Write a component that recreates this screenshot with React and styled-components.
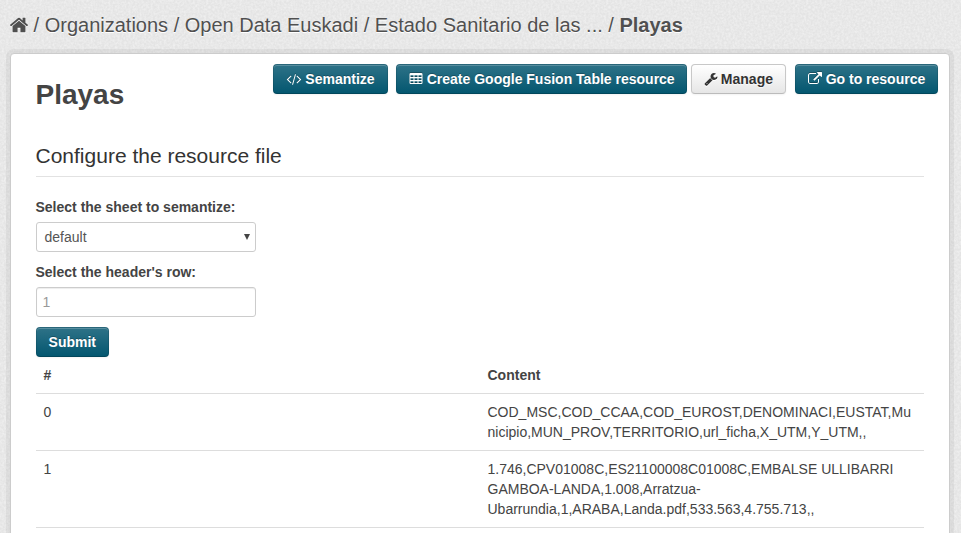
import React from "react";
import styled, { createGlobalStyle, css } from "styled-components";

const noise =
  "<svg xmlns='http://www.w3.org/2000/svg' width='200' height='200'><filter id='n' x='0' y='0' width='100%' height='100%'><feTurbulence type='fractalNoise' baseFrequency='0.45' numOctaves='2' seed='4' stitchTiles='stitch'/><feColorMatrix values='0 0 0 0 1  0 0 0 0 1  0 0 0 0 1  0.8 0 0 0 -0.25'/></filter><rect width='200' height='200' filter='url(#n)'/></svg>";

const GlobalStyle = createGlobalStyle`
  *, *::before, *::after { box-sizing: border-box; }
  body {
    margin: 0;
    height: 533px;
    overflow: hidden;
    color: #444;
    font: 14px/20px "Liberation Sans", Arial, sans-serif;
    background: #e4e4e4 url("data:image/svg+xml,${encodeURIComponent(noise).replace(/'/g, "%27")}");
  }
`;

const Page = styled.div`
  height: 533px;
  overflow: hidden;
  padding: 0 11.5px 0 9.5px;
`;

const Breadcrumb = styled.nav`
  display: flex;
  align-items: center;
  height: 53px;
  padding-bottom: 3px;
  font-size: 20px;
  line-height: 26px;
  white-space: pre;
  color: #505050;
  text-shadow: 0 1px 0 #fff;
`;

const Current = styled.strong`
  font-weight: 700;
`;

const Glyph = styled.svg`
  flex: none;
  display: block;
  width: ${(p) => p.$size}px;
  height: ${(p) => p.$size}px;
  margin: ${(p) => p.$margin || "0"};
  fill: currentColor;
  overflow: visible;
  filter: drop-shadow(${(p) => p.$shadow || "0 -1px 0 rgba(0, 0, 0, 0.25)"});
`;

const Panel = styled.main`
  height: 600px;
  padding: 10px 25px 0;
  background: #fff;
  border: 1px solid #ccc;
  border-radius: 4px 4px 0 0;
  box-shadow: 0 0 0 4px rgba(0, 0, 0, 0.05);
`;

const Header = styled.header`
  display: flex;
  justify-content: space-between;
  height: 70px;
  margin-right: -14px;
`;

const Title = styled.h1`
  margin: 11px 0 0;
  font-size: 28px;
  line-height: 40px;
  font-weight: 700;
`;

const Actions = styled.div`
  display: flex;
  height: 30px;
`;

const Button = styled.button`
  display: inline-flex;
  align-items: center;
  justify-content: center;
  width: ${(p) => p.$width}px;
  height: 30px;
  margin: 0 0 0 ${(p) => p.$gap || 0}px;
  padding: 0;
  font: 700 14px/20px "Liberation Sans", Arial, sans-serif;
  white-space: pre;
  border-radius: 4px;
  ${(p) =>
    p.$plain
      ? css`
          color: #333;
          background: linear-gradient(#fff, #e6e6e6);
          border: 1px solid #c8c8c8;
          border-bottom-color: #bbb;
          text-shadow: 0 1px 1px rgba(255, 255, 255, 0.75);
        `
      : css`
          color: #fff;
          background: linear-gradient(#2f7388, #02566f) border-box;
          border: 1px solid rgba(0, 0, 0, 0.1);
          border-bottom-color: rgba(0, 0, 0, 0.18);
          text-shadow: 0 -1px 0 rgba(0, 0, 0, 0.25);
        `}
  box-shadow: inset 0 1px 0 rgba(255, 255, 255, 0.2), 0 1px 2px rgba(0, 0, 0, 0.05);
`;

const SectionTitle = styled.h2`
  margin: 0 0 20px;
  height: 43px;
  padding-top: 7px;
  border-bottom: 1px solid #e2e2e2;
  font-size: 21px;
  line-height: 30px;
  font-weight: 400;
  color: #333;
`;

const Form = styled.form`
  display: flex;
  flex-direction: column;
  align-items: flex-start;
`;

const Label = styled.label`
  margin-bottom: 5px;
  font-weight: 700;
`;

const Control = styled.div`
  display: flex;
  align-items: center;
  justify-content: space-between;
  width: 220px;
  height: 30px;
  margin-bottom: 10px;
  padding: 0 4.5px 0 8px;
  color: #555;
  background: #fff;
  border: 1px solid #ccc;
  border-radius: 3px;
`;

const Arrow = styled.svg`
  width: 6px;
  height: 6px;
  fill: #444;
`;

const Input = styled.input`
  width: 220px;
  height: 30px;
  margin: 0 0 10px;
  padding: 4px 6px;
  font: 14px/20px "Liberation Sans", Arial, sans-serif;
  color: #555;
  border: 1px solid #ccc;
  border-radius: 3px;
  box-shadow: inset 0 1px 1px rgba(0, 0, 0, 0.075);
  &::placeholder { color: #999; }
`;

const Table = styled.table`
  width: 888px;
  table-layout: fixed;
  border-collapse: collapse;
`;

const Cell = styled.td`
  padding: 8px;
  text-align: left;
  vertical-align: top;
  overflow-wrap: break-word;
  border-bottom: 1px solid #ddd;
`;

const icons = {
  home: "M1472 992v480q0 26-19 45t-45 19h-384v-384h-256v384h-384q-26 0-45-19t-19-45v-480q0-1 .5-3t.5-3l575-474 575 474q1 2 1 6zm223-69l-62 74q-8 9-21 11h-3q-13 0-21-7l-692-577-692 577q-12 8-24 7-13-2-21-11l-62-74q-8-10-7-23.5t11-21.5l719-599q32-26 76-26t76 26l244 204v-195q0-14 9-23t23-9h192q14 0 23 9t9 23v408l219 182q10 8 11 21.5t-7 23.5z",
  code: "M553 1399l-50 50q-10 10-23 10t-23-10l-466-466q-10-10-10-23t10-23l466-466q10-10 23-10t23 10l50 50q10 10 10 23t-10 23l-393 393 393 393q10 10 10 23t-10 23zm591-1067l-373 1291q-4 13-15.5 19.5t-23.5 2.5l-62-17q-13-4-19.5-15.5t-2.5-24.5l373-1291q4-13 15.5-19.5t23.5-2.5l62 17q13 4 19.5 15.5t2.5 24.5zm657 651l-466 466q-10 10-23 10t-23-10l-50-50q-10-10-10-23t10-23l393-393-393-393q-10-10-10-23t10-23l50-50q10-10 23-10t23 10l466 466q10 10 10 23t-10 23z",
  table:
    "M224 128h1344q66 0 113 47t47 113v1088q0 66-47 113t-113 47h-1344q-66 0-113-47t-47-113v-1088q0-66 47-113t113-47z" +
    [192, 704, 1216]
      .map((x) => [416, 800, 1184].map((y) => `M${x} ${y}v224h384v-224z`).join(""))
      .join(""),
  wrench: "M448 1472q0-26-19-45t-45-19-45 19-19 45 19 45 45 19 45-19 19-45zm644-420l-682 682q-37 37-90 37-52 0-91-37l-106-108q-38-36-38-90 0-53 38-91l681-681q39 98 114.5 173.5t173.5 114.5zm634-435q0 39-23 106-47 134-164.5 217.5t-258.5 83.5q-185 0-316.5-131.5t-131.5-316.5 131.5-316.5 316.5-131.5q58 0 121.5 16.5t107.5 46.5q16 11 16 28t-16 28l-293 169v224l193 107q5-3 79-48.5t135.5-81 70.5-35.5q15 0 23.5 10t8.5 25z",
  external: "M1408 928v320q0 119-84.5 203.5t-203.5 84.5h-832q-119 0-203.5-84.5t-84.5-203.5v-832q0-119 84.5-203.5t203.5-84.5h704q14 0 23 9t9 23v64q0 14-9 23t-23 9h-704q-66 0-113 47t-47 113v832q0 66 47 113t113 47h832q66 0 113-47t47-113v-320q0-14 9-23t23-9h64q14 0 23 9t9 23zm384-864v512q0 26-19 45t-45 19-45-19l-176-176-652 652q-10 10-23 10t-23-10l-114-114q-10-10-10-23t10-23l652-652-176-176q-19-19-19-45t19-45 45-19h512q26 0 45 19t19 45z",
};

function Icon({ name, size = 14, margin, shadow }) {
  return (
    <Glyph viewBox="0 0 1792 1792" $size={size} $margin={margin} $shadow={shadow} aria-hidden="true">
      <path d={icons[name]} fillRule="evenodd" />
    </Glyph>
  );
}

const rows = [
  ["0", "COD_MSC,COD_CCAA,COD_EUROST,DENOMINACI,EUSTAT,Municipio,MUN_PROV,TERRITORIO,url_ficha,X_UTM,Y_UTM,,"],
  ["1", "1.746,CPV01008C,ES21100008C01008C,EMBALSE ULLIBARRI GAMBOA-LANDA,1.008,Arratzua-Ubarrundia,1,ARABA,Landa.pdf,533.563,4.755.713,,"],
];

export default function App() {
  return (
    <Page>
      <GlobalStyle />
      <Breadcrumb>
        <Icon name="home" size={20} margin="0 -1px 0 -0.5px" shadow="0 1px 0 #fff" />
        <span> / Organizations / Open Data Euskadi / Estado Sanitario de las ... / </span>
        <Current>Playas</Current>
      </Breadcrumb>
      <Panel>
        <Header>
          <Title>Playas</Title>
          <Actions>
            <Button $width={115}>
              <Icon name="code" margin="0 0 0 2px" />
              <span> Semantize</span>
            </Button>
            <Button $width={291} $gap={8}>
              <Icon name="table" margin="0 0 0 1.5px" />
              <span> Create Google Fusion Table resource</span>
            </Button>
            <Button $width={95} $gap={4} $plain>
              <Icon name="wrench" margin="0 -1px 0 1px" shadow="0 1px 0 #fff" />
              <span> Manage</span>
            </Button>
            <Button $width={143} $gap={9}>
              <Icon name="external" margin="0 0 0 1px" />
              <span> Go to resource</span>
            </Button>
          </Actions>
        </Header>
        <SectionTitle>Configure the resource file</SectionTitle>
        <Form onSubmit={(e) => e.preventDefault()}>
          <Label>Select the sheet to semantize:</Label>
          <Control role="combobox">
            <span>default</span>
            <Arrow viewBox="0 0 6 6">
              <path d="M0 0h6L3 6z" />
            </Arrow>
          </Control>
          <Label htmlFor="header-row">Select the header's row:</Label>
          <Input id="header-row" placeholder="1" />
          <Button $width={73.6}>Submit</Button>
        </Form>
        <Table>
          <thead>
            <tr>
              <Cell as="th">#</Cell>
              <Cell as="th">Content</Cell>
            </tr>
          </thead>
          <tbody>
            {rows.map(([index, content]) => (
              <tr key={index}>
                <Cell>{index}</Cell>
                <Cell>{content}</Cell>
              </tr>
            ))}
          </tbody>
        </Table>
      </Panel>
    </Page>
  );
}
